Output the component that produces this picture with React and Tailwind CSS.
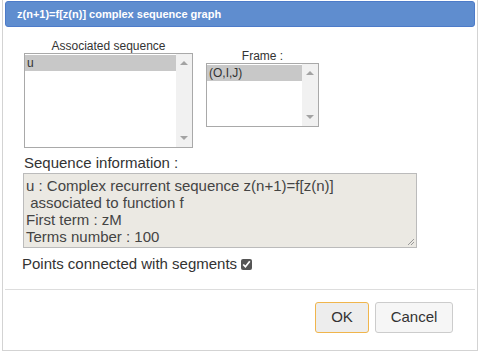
import { useState } from "react";

function ScrollBar() {
  return (
    <div className="w-[16px] h-full bg-[#f1f1f1] flex flex-col items-center justify-between py-[7px]">
      <div className="w-0 h-0 border-l-[4px] border-r-[4px] border-b-[4px] border-l-transparent border-r-transparent border-b-[#a3a3a3]" />
      <div className="w-0 h-0 border-l-[4px] border-r-[4px] border-t-[4px] border-l-transparent border-r-transparent border-t-[#a3a3a3]" />
    </div>
  );
}

function ListBox({ items, className }) {
  return (
    <div className={`flex border border-[#a9a9a9] bg-white ${className}`}>
      <div className="flex-1 pt-px">
        {items.map((it, i) => (
          <div
            key={it}
            className={`h-[16px] leading-[16px] pl-[2px] text-[12px] text-[#333] ${i === 0 ? "bg-[#c8c8c8]" : ""}`}
          >
            {it}
          </div>
        ))}
      </div>
      <ScrollBar />
    </div>
  );
}

export default function App() {
  const [connected, setConnected] = useState(true);

  return (
    <div
      className="w-[480px] h-[352px] bg-white overflow-hidden"
      style={{ fontFamily: '"Liberation Sans", Arial, sans-serif' }}
    >
      <div className="ml-[2px] w-[476px] h-[351px] border border-t-0 border-[#d3d3d3] bg-white pt-px px-[2px]">
        {/* Title bar */}
        <div className="h-[26px] rounded-[3px] bg-[#5f8dcf] border border-[#4d7bc9] flex items-center pl-[11px]">
          <span className="text-white font-bold text-[11px]">z(n+1)=f[z(n)] complex sequence graph</span>
        </div>

        {/* Content */}
        <div className="pl-[19px] pt-[12px] text-[#333]">
          <div className="flex gap-[13px]">
            <div className="w-[169px] flex flex-col">
              <div className="text-center text-[12px] leading-[14px]">Associated sequence</div>
              <ListBox items={["u"]} className="h-[95px]" />
            </div>
            <div className="w-[113px] flex flex-col pt-[10px]">
              <div className="text-center text-[12px] leading-[14px]">Frame :</div>
              <ListBox items={["(O,I,J)"]} className="h-[64px]" />
            </div>
          </div>

          <div className="mt-[7px] text-[15px] leading-[16px]">Sequence information :</div>
          <div className="mt-[2px] relative w-[394px] h-[75px] border border-[#bbbbbb] bg-[#ebe9e3] -ml-px pl-[2px] pt-[3px] text-[15px] leading-[17px] text-[#444] whitespace-pre">
            {"u : Complex recurrent sequence z(n+1)=f[z(n)]\n associated to function f\nFirst term : zM\nTerms number : 100"}
            <svg className="absolute right-[1px] bottom-[1px]" width="8" height="8" viewBox="0 0 8 8">
              <path d="M7 1 L1 7 M7 4 L4 7" stroke="#999" strokeWidth="1" />
            </svg>
          </div>

          <label className="mt-[8px] flex items-center gap-[4px] text-[15px] leading-[16px] -ml-[2px]">
            Points connected with segments
            <input
              type="checkbox"
              checked={connected}
              onChange={() => setConnected(!connected)}
              className="w-[11px] h-[11px] accent-[#555] m-0"
            />
          </label>
        </div>

        <div className="mt-[17px] border-t border-[#dddddd]" />

        {/* Buttons */}
        <div className="flex justify-end gap-[6px] pt-[12px] pr-[22px]">
          <button className="w-[54px] h-[31px] rounded-[3px] border border-[#f0b54c] bg-[#ededed] text-[15px] text-[#333]">
            OK
          </button>
          <button className="w-[78px] h-[31px] rounded-[3px] border border-[#cccccc] bg-[#f6f6f6] text-[15px] text-[#333]">
            Cancel
          </button>
        </div>
      </div>
    </div>
  );
}
